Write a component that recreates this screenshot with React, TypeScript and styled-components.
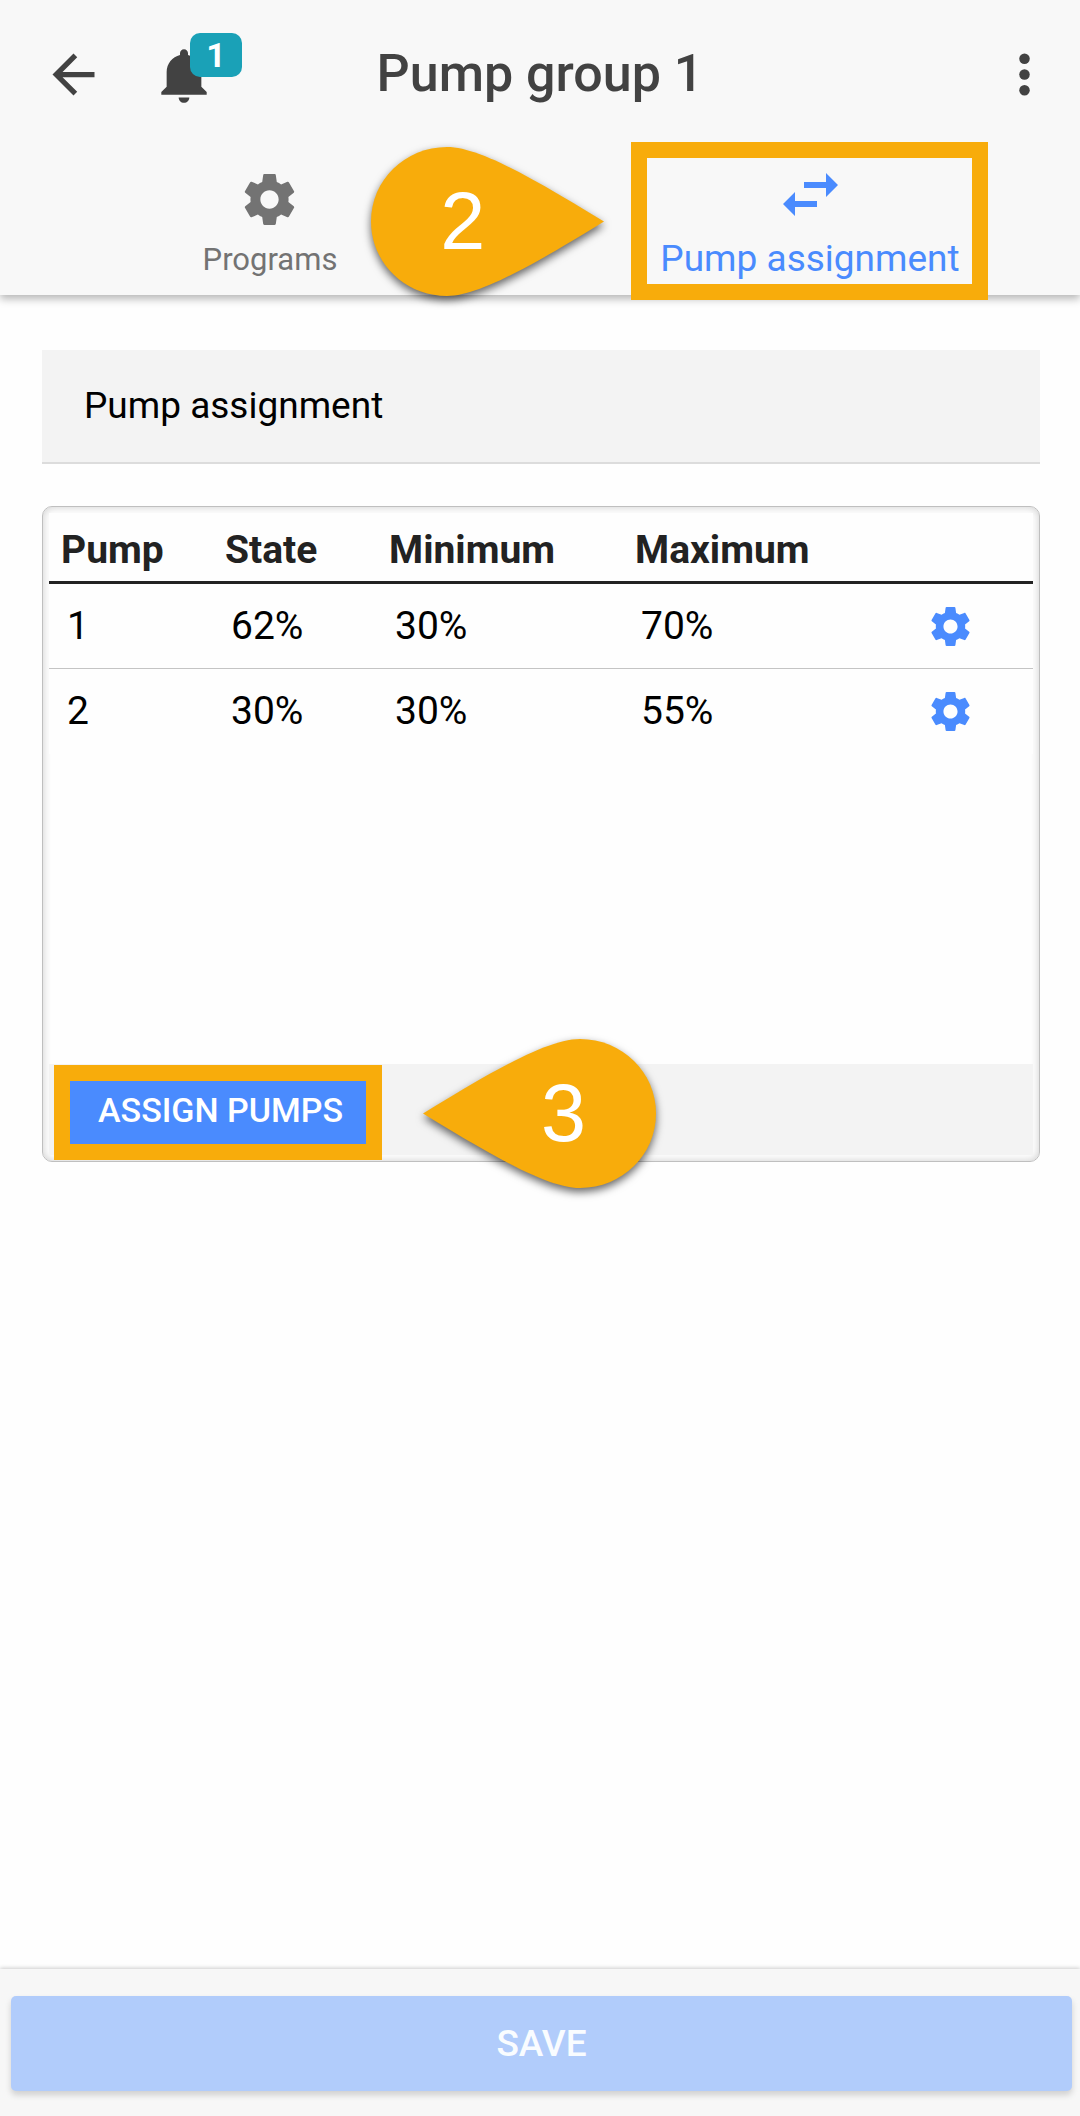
import React from "react";
import styled, { createGlobalStyle } from "styled-components";

const ORANGE = "#f8ac0b";
const BLUE = "#4a8bfe";

const GlobalStyle = createGlobalStyle`
  *, *::before, *::after { box-sizing: border-box; }
  body { margin: 0; background: #fefefe; font-family: Roboto, "Noto Sans", sans-serif; color: #000; }
  button { margin: 0; padding: 0; border: 0; background: none; font: inherit; color: inherit; cursor: pointer; }
  svg { display: block; }
`;

const Page = styled.div`
  display: flex;
  flex-direction: column;
  min-height: 100vh;
`;

const Header = styled.header`
  background: #f8f8f8;
  box-shadow: 0 4px 8px rgba(0, 0, 0, 0.28);
`;

const Toolbar = styled.div`
  display: grid;
  grid-template-columns: 1fr auto 1fr;
  align-items: center;
  height: 148px;
  padding: 0 24px;
  color: #424242;
`;

const ToolbarStart = styled.div`
  display: flex;
  align-items: center;
  gap: 46px;
  padding-left: 18px;
`;

const ToolbarEnd = styled.div`
  display: flex;
  justify-content: flex-end;
`;

const IconButton = styled.button`
  position: relative;
  display: flex;
`;

const BellButton = styled(IconButton)`
  padding-top: 4px;
`;

const Badge = styled.span`
  position: absolute;
  left: 39px;
  top: -6px;
  width: 52px;
  height: 44px;
  border-radius: 10px;
  background: #1aa1b7;
  color: #fff;
  font-size: 34px;
  font-weight: 700;
  line-height: 44px;
  text-align: center;
`;

const Title = styled.h1`
  margin: 0;
  font-size: 52px;
  font-weight: 500;
  line-height: 60px;
`;

const Tabs = styled.nav`
  display: grid;
  grid-template-columns: 1fr 1fr;
  height: 147px;
`;

const TabIcon = styled.span`
  display: flex;
  align-items: center;
  height: 62px;
`;

const TabLabel = styled.span`
  line-height: 44px;
`;

const TabContent = styled.span`
  position: relative;
  display: flex;
  flex-direction: column;
  align-items: center;
`;

const Tab = styled.button<{ $active?: boolean }>`
  display: flex;
  flex-direction: column;
  align-items: center;
  justify-content: flex-end;
  padding-bottom: ${(p) => (p.$active ? 14 : 13)}px;
  color: ${(p) => (p.$active ? BLUE : "#737373")};
  font-size: ${(p) => (p.$active ? 37 : 31)}px;

  ${TabContent} {
    gap: ${(p) => (p.$active ? 12 : 8)}px;
  }
`;

const Frame = styled.span`
  position: absolute;
  inset: -21px -28px -19px -29px;
  border: 16px solid ${ORANGE};
`;

const CalloutBox = styled.span<{ $side: "left" | "right" }>`
  position: absolute;
  top: 50%;
  ${(p) => (p.$side === "left" ? "right: calc(100% + 43px);" : "left: calc(100% + 57px);")}
  width: 233px;
  height: 149px;
  margin-top: -74px;
`;

const CalloutNumber = styled.span<{ $side: "left" | "right" }>`
  position: absolute;
  inset: 0;
  padding: ${(p) => (p.$side === "left" ? "0 50px 0 0" : "0 0 0 48px")};
  color: #fff;
  font-family: "Liberation Sans", Arial, sans-serif;
  font-size: 81px;
  font-weight: 400;
  line-height: 149px;
  text-align: center;
`;

const Drop = styled.svg<{ $flip: boolean }>`
  overflow: visible;
  transform: ${(p) => (p.$flip ? "scaleX(-1)" : "none")};
`;

const DropShade = styled.span`
  display: block;
  filter: drop-shadow(0 4px 4px rgba(0, 0, 0, 0.6));
`;

const Main = styled.main`
  flex: 1;
  display: flex;
  flex-direction: column;
  gap: 42px;
  padding: 55px 40px 42px 42px;
`;

const SectionTitle = styled.h2`
  margin: 0;
  padding: 35px 42px;
  border-bottom: 2px solid #dcdcdc;
  background: #f3f3f3;
  font-size: 37px;
  font-weight: 400;
  line-height: 42px;
`;

const Card = styled.section`
  display: flex;
  flex-direction: column;
  justify-content: space-between;
  min-height: 656px;
  padding: 6px;
  border: 1px solid #bfbfbf;
  border-radius: 10px;
  box-shadow: inset 0 0 8px rgba(0, 0, 0, 0.2);
`;

const Table = styled.table`
  width: 100%;
  table-layout: fixed;
  border-collapse: separate;
  border-spacing: 0;
  background: #fefefe;
`;

const Th = styled.th<{ $wide?: boolean }>`
  width: ${(p) => (p.$wide ? "25%" : "16.6667%")};
  height: 71px;
  padding: 6px 0 0 12px;
  border-bottom: 3px solid #222;
  color: #222;
  font-size: 39px;
  font-weight: 700;
  line-height: 44px;
  text-align: left;
`;

const Td = styled.td<{ $last?: boolean }>`
  height: 85px;
  padding: 0 0 0 18px;
  border-bottom: 1px solid ${(p) => (p.$last ? "transparent" : "#c4c4c4")};
  font-size: 39px;
  line-height: 44px;
`;

const ActionCell = styled(Td)`
  padding: 0;
`;

const RowButton = styled.button`
  display: flex;
  margin: 0 auto;
  color: ${BLUE};
`;

const CardFooter = styled.div`
  display: flex;
  height: 91px;
  padding: 1px 0 0 5px;
  background: #f3f3f3;
`;

const AssignWrap = styled.div`
  position: relative;
  display: flex;
  height: 95px;
  padding: 16px;
`;

const AssignButton = styled.button`
  height: 63px;
  padding: 0 23px 6px 28px;
  background: ${BLUE};
  color: #fff;
  font-size: 34px;
  font-weight: 500;
  text-transform: uppercase;
`;

const AssignFrame = styled.span`
  position: absolute;
  inset: 0;
  border: 16px solid ${ORANGE};
  pointer-events: none;
`;

const Footer = styled.footer`
  padding: 27px 8px 25px 11px;
  background: #f7f7f7;
  box-shadow: 0 -1px 4px rgba(0, 0, 0, 0.2);
`;

const SaveButton = styled.button`
  width: 100%;
  height: 95px;
  border-radius: 5px;
  background: #b1ccfb;
  box-shadow: 0 4px 6px rgba(0, 0, 0, 0.16);
  color: #f9fcff;
  font-size: 37px;
  font-weight: 500;
`;

function GearIcon({ size }: { size: number }) {
  return (
    <svg width={size} height={size} viewBox="0 0 24 24" fill="currentColor" aria-hidden="true">
      <path d="M19.43 12.98c.04-.32.07-.64.07-.98s-.03-.66-.07-.98l2.11-1.65c.19-.15.24-.42.12-.64l-2-3.46c-.12-.22-.39-.3-.61-.22l-2.49 1c-.52-.4-1.08-.73-1.69-.98l-.38-2.65C14.46 2.18 14.25 2 14 2h-4c-.25 0-.46.18-.49.42l-.38 2.65c-.61.25-1.17.59-1.69.98l-2.49-1c-.23-.09-.49 0-.61.22l-2 3.46c-.13.22-.07.49.12.64l2.11 1.65c-.04.32-.07.65-.07.98s.03.66.07.98l-2.11 1.65c-.19.15-.24.42-.12.64l2 3.46c.12.22.39.3.61.22l2.49-1c.52.4 1.08.73 1.69.98l.38 2.65c.03.24.24.42.49.42h4c.25 0 .46-.18.49-.42l.38-2.65c.61-.25 1.17-.59 1.69-.98l2.49 1c.23.09.49 0 .61-.22l2-3.46c.12-.22.07-.49-.12-.64l-2.11-1.65zM12 15.6c-1.99 0-3.6-1.61-3.6-3.6s1.61-3.6 3.6-3.6 3.6 1.61 3.6 3.6-1.61 3.6-3.6 3.6z" />
    </svg>
  );
}

function BackIcon() {
  return (
    <svg width="63" height="63" viewBox="0 0 24 24" fill="currentColor" aria-hidden="true">
      <path d="M20 11H7.83l5.59-5.59L12 4l-8 8 8 8 1.41-1.41L7.83 13H20v-2z" />
    </svg>
  );
}

function BellIcon() {
  return (
    <svg width="66" height="66" viewBox="0 0 512 512" fill="currentColor" aria-hidden="true">
      <path d="M256 464c22.779 0 41.411-18.719 41.411-41.6h-82.823c0 22.881 18.633 41.6 41.412 41.6zm134.589-124.8V224.8c0-63.44-44.516-117.518-103.53-131.041V79.2c0-17.682-13.457-31.2-31.059-31.2s-31.059 13.518-31.059 31.2v14.559c-59.015 13.523-103.53 67.601-103.53 131.041v114.4L80 380.8v20.8h352v-20.8l-41.411-41.6z" />
    </svg>
  );
}

function MoreIcon() {
  return (
    <svg width="63" height="63" viewBox="0 0 24 24" fill="currentColor" aria-hidden="true">
      <circle cx="12" cy="6" r="2" />
      <circle cx="12" cy="12" r="2" />
      <circle cx="12" cy="18" r="2" />
    </svg>
  );
}

function SwapIcon() {
  return (
    <svg width="55" height="43" viewBox="0 0 55 43" fill="currentColor" aria-hidden="true">
      <path d="M43 0v9H21v6h22v9l12-12zM12 19L0 31l12 12v-9h22v-6H12z" />
    </svg>
  );
}

function Callout({ side, children }: { side: "left" | "right"; children: React.ReactNode }) {
  return (
    <CalloutBox $side={side}>
      <DropShade>
        <Drop $flip={side === "right"} width="233" height="149" viewBox="0 0 233 149" fill={ORANGE} aria-hidden="true">
          <path d="M76 0C34 0 0 33 0 74.500S34 149 76 149C108 149 162 118 233 74.500C162 31 108 0 76 0Z" />
        </Drop>
      </DropShade>
      <CalloutNumber $side={side}>{children}</CalloutNumber>
    </CalloutBox>
  );
}

const pumps = [
  { id: 1, state: "62%", min: "30%", max: "70%" },
  { id: 2, state: "30%", min: "30%", max: "55%" },
];

export default function App() {
  return (
    <Page>
      <GlobalStyle />
      <Header>
        <Toolbar>
          <ToolbarStart>
            <IconButton aria-label="Back">
              <BackIcon />
            </IconButton>
            <BellButton aria-label="Notifications">
              <BellIcon />
              <Badge>1</Badge>
            </BellButton>
          </ToolbarStart>
          <Title>Pump group 1</Title>
          <ToolbarEnd>
            <IconButton aria-label="More">
              <MoreIcon />
            </IconButton>
          </ToolbarEnd>
        </Toolbar>
        <Tabs>
          <Tab>
            <TabContent>
              <TabIcon>
                <GearIcon size={61} />
              </TabIcon>
              <TabLabel>Programs</TabLabel>
            </TabContent>
          </Tab>
          <Tab $active>
            <TabContent>
              <TabIcon>
                <SwapIcon />
              </TabIcon>
              <TabLabel>Pump assignment</TabLabel>
              <Frame>
                <Callout side="left">2</Callout>
              </Frame>
            </TabContent>
          </Tab>
        </Tabs>
      </Header>
      <Main>
        <SectionTitle>Pump assignment</SectionTitle>
        <Card>
          <Table>
            <thead>
              <tr>
                <Th>Pump</Th>
                <Th>State</Th>
                <Th $wide>Minimum</Th>
                <Th $wide>Maximum</Th>
                <Th aria-label="Settings" />
              </tr>
            </thead>
            <tbody>
              {pumps.map((pump, i) => {
                const last = i === pumps.length - 1;
                return (
                  <tr key={pump.id}>
                    <Td $last={last}>{pump.id}</Td>
                    <Td $last={last}>{pump.state}</Td>
                    <Td $last={last}>{pump.min}</Td>
                    <Td $last={last}>{pump.max}</Td>
                    <ActionCell $last={last}>
                      <RowButton aria-label={`Pump ${pump.id} settings`}>
                        <GearIcon size={47} />
                      </RowButton>
                    </ActionCell>
                  </tr>
                );
              })}
            </tbody>
          </Table>
          <CardFooter>
            <AssignWrap>
              <AssignButton>Assign pumps</AssignButton>
              <AssignFrame>
                <Callout side="right">3</Callout>
              </AssignFrame>
            </AssignWrap>
          </CardFooter>
        </Card>
      </Main>
      <Footer>
        <SaveButton>SAVE</SaveButton>
      </Footer>
    </Page>
  );
}
